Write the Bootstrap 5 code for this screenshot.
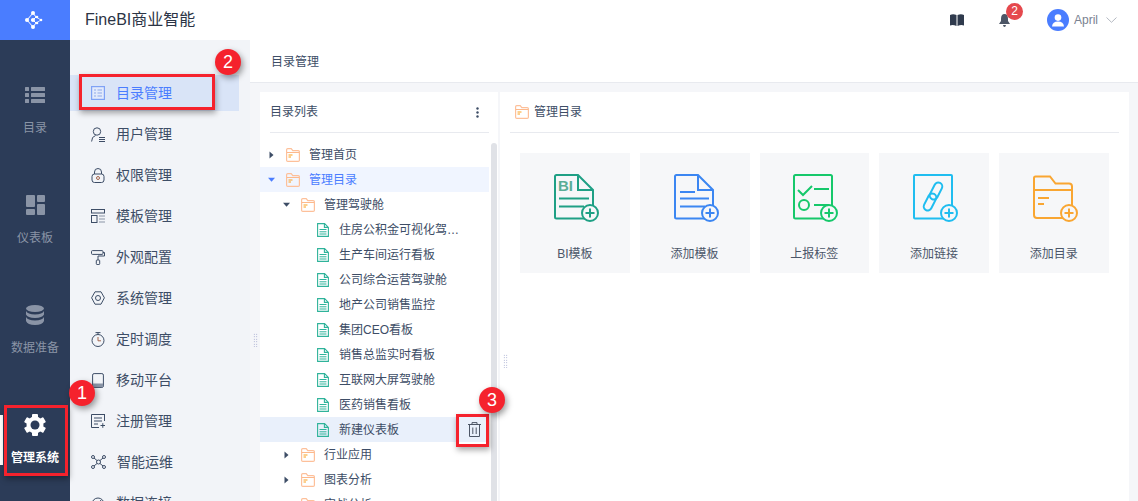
<!doctype html>
<html lang="zh">
<head>
<meta charset="utf-8">
<title>FineBI</title>
<link href="https://cdn.jsdelivr.net/npm/bootstrap@5.3.0/dist/css/bootstrap.min.css" rel="stylesheet">
<style>
html,body{height:501px;overflow:hidden}
body{font-family:"Liberation Sans","Noto Sans CJK SC",sans-serif;font-size:12px;color:#3d4d66;background:#f5f6f9;position:relative}
svg{display:block;flex:none}
.shell{height:501px;overflow:hidden}
.rail{width:70px;background:#2c3c58;flex:none}
.logo-box{height:40px;background:#4a7dff;flex:none}
.rail-item{height:110px;padding-top:44px;color:#8a94a6;gap:13px;flex:none}
.rail-ico{height:22px;display:flex;align-items:center;flex:none}
.rail-item.on{color:#fff;position:relative;font-weight:700}
.rail-item.on::before{content:"";position:absolute;left:0;top:45px;width:3px;height:50px;background:#fff}
.body-col{min-width:0;min-height:0}
.topbar{height:40px;background:#fff;padding-left:15px;flex:none}
.brand-name{font-size:16px;color:#2b3445}
.tool-zone{padding-right:21px}
.bell-wrap{position:relative;margin-left:35px;margin-right:37px}
.bell-badge{position:absolute;left:7px;top:-11px;width:17px;height:17px;border-radius:50%;background:#e5484d;color:#fff;font-size:12px;line-height:17px;text-align:center}
.avatar{width:22px;height:22px;border-radius:50%;background:#4a7dff}
.user-name{color:#7a8291;margin:0 8px 0 5px}
.lower{min-height:0;overflow:hidden}
.side-nav{width:180px;background:#f2f4f8;padding-top:35px;flex:none;overflow:hidden}
.nav-row{height:36px;margin:0 11px 5px 0;padding-left:21px;font-size:14px;gap:11px;color:#3d4d66;flex:none}
.nav-row.on{background:#d9e4f7;color:#4a7dff}
.main-col{min-width:0;min-height:0}
.crumbs{height:43px;background:#fff;border-bottom:1px solid #e8eaef;padding:2px 0 0 21px;flex:none}
.work{padding:9px 9px 0 10px;min-height:0;gap:2px;position:relative}
.list-pane{width:238px;background:#fff;flex:none;position:relative;overflow:hidden}
.pane-head{height:41px;margin:0 9px 0 10px;border-bottom:1px solid #e8eaef;flex:none}
.dots{margin-right:10px}
.tree-body{padding-top:9px;width:229px;flex:none}
.tree-row{height:25px;color:#3d4d66;flex:none}
.tree-row.sel{background:#f0f5ff;color:#4a7dff}
.tree-row.cur{background:#e9f0fb}
.lv1{padding-left:8px}.lv2{padding-left:23px}.lv3{padding-left:57px}
.tw{width:7px;margin-right:11px}
.lbl{margin-left:9px;white-space:nowrap}
.lv3 .lbl{margin-left:10px}
.bar-thumb{position:absolute;left:231px;top:51px;bottom:0;width:6px;border-radius:3px 3px 0 0;background:#e0e2e7}
.bin{position:absolute;left:208px;top:330px}
.right-pane{background:#fff;padding:0 10px;min-width:0}
.pane-title{height:41px;border-bottom:1px solid #e8eaef;padding-left:5px;gap:5px}
.tiles{padding:20px 0 0 10px;gap:10px}
.tile{width:109.75px;height:120px;background:#f6f7f9;padding-top:20px;gap:22px;color:#4b5668;flex:none}
.tile svg{margin-left:2px}
.grip{position:absolute;width:5px;height:14px;background-image:radial-gradient(#8f97c4 .7px,transparent .8px);background-size:2.5px 2.5px}
.note-ring{position:absolute;width:26px;height:26px;border-radius:50%;background:#f5222d;color:#fff;font-size:18px;line-height:26px;text-align:center;box-shadow:2px 3px 6px rgba(0,0,0,.4)}
.note-box{position:absolute;border:3px solid #f5222d;box-shadow:1px 3px 6px rgba(0,0,0,.35)}
</style>
</head>
<body>
<svg width="0" height="0" class="position-absolute">
<defs>
<symbol id="fld" viewBox="0 0 14 14"><path d="M.6 1.800q0-1.200 1.200-1.200h3.400l1.600 2h5.400q1.200 0 1.200 1.200v8.400q0 1.200-1.200 1.200H1.800q-1.200 0-1.200-1.200z" fill="none" stroke="#fdc09a" stroke-width="1.200"/><path d="M1 4.500h12" stroke="#fdb98c" stroke-width="1"/><path d="M2.500 7h4M2.500 9h2.500" stroke="#f9a01e" stroke-width="1"/></symbol>
<symbol id="doc" viewBox="0 0 12 14"><path d="M.6.600h7l3.800 3.800v9H.6zM7.400.800v3.600h3.800" fill="none" stroke="#2fb39a" stroke-width="1.100"/><path d="M2.500 6.500h7M2.500 8.800h7M2.500 11h7" stroke="#2fb39a" stroke-width="1"/></symbol>
<symbol id="arrR" viewBox="0 0 7 8"><path d="M1.500 0.500l4 3.500-4 3.500z" fill="#3d4d66"/></symbol>
<symbol id="arrD" viewBox="0 0 8 7"><path d="M0 1.500h8L4 6z" fill="currentColor"/></symbol>
</defs>
</svg>

<div class="d-flex shell">
  <aside class="rail d-flex flex-column">
    <div class="logo-box d-flex align-items-center justify-content-center">
      <svg width="20" height="20" viewBox="0 0 20 20"><g fill="none" stroke="#fff" stroke-width="1"><path d="M8 3L2 10l6 7M8 3l3 4-3 3 3 3-3 4M8 10l-2 0"/><path d="M11 7l5 3-5 3" opacity=".75"/></g><g fill="#fff"><circle cx="8" cy="3" r="2"/><circle cx="2" cy="10" r="2"/><circle cx="8" cy="17" r="2"/><circle cx="8" cy="10" r="2"/><circle cx="12" cy="7" r="1.300"/><circle cx="12" cy="13" r="1.300"/><circle cx="16" cy="10" r="1.300"/></g></svg>
    </div>
    <div class="rail-item d-flex flex-column align-items-center">
      <div class="rail-ico"><svg width="20" height="16" viewBox="0 0 20 16" fill="#8a94a6"><rect width="4" height="4" rx=".5"/><rect x="6" width="14" height="4" rx=".5"/><rect y="6" width="4" height="4" rx=".5"/><rect x="6" y="6" width="14" height="4" rx=".5"/><rect y="12" width="4" height="4" rx=".5"/><rect x="6" y="12" width="14" height="4" rx=".5"/></svg></div>
      <span>目录</span>
    </div>
    <div class="rail-item d-flex flex-column align-items-center">
      <div class="rail-ico"><svg width="19" height="20" viewBox="0 0 19 20" fill="#8a94a6"><rect width="9" height="12" rx="1"/><rect x="11" width="8" height="7" rx="1"/><rect y="14" width="9" height="6" rx="1"/><rect x="11" y="9" width="8" height="11" rx="1"/></svg></div>
      <span>仪表板</span>
    </div>
    <div class="rail-item d-flex flex-column align-items-center">
      <div class="rail-ico"><svg width="18" height="20" viewBox="0 0 18 20" fill="#8a94a6"><ellipse cx="9" cy="3.500" rx="9" ry="3.500"/><path d="M0 6c1 2.300 4 3.500 9 3.500S17 8.300 18 6v3.500c-1 2.300-4 3.500-9 3.500S1 11.800 0 9.500z"/><path d="M0 12c1 2.300 4 3.500 9 3.500s8-1.200 9-3.500v4c-1 2.500-4 4-9 4s-8-1.500-9-4z"/></svg></div>
      <span>数据准备</span>
    </div>
    <div class="rail-item on d-flex flex-column align-items-center">
      <div class="rail-ico"><svg width="22" height="22" viewBox="0 0 22 22"><g fill="#fff"><rect x="8" y="0" width="6" height="22" rx="1"/><rect x="8" y="0" width="6" height="22" rx="1" transform="rotate(60 11 11)"/><rect x="8" y="0" width="6" height="22" rx="1" transform="rotate(120 11 11)"/><circle cx="11" cy="11" r="8.500"/></g><circle cx="11" cy="11" r="4.500" fill="#2c3c58"/></svg></div>
      <span>管理系统</span>
    </div>
  </aside>

  <div class="body-col flex-grow-1 d-flex flex-column">
    <header class="topbar d-flex align-items-center justify-content-between">
      <span class="brand-name">FineBI商业智能</span>
      <div class="tool-zone d-flex align-items-center">
        <svg width="14" height="12" viewBox="0 0 14 12"><path d="M0 1q3-1.500 6.500 0V12Q3 10.500 0 11.500z" fill="#2f3a4d"/><path d="M14 1q-3-1.500-6.500 0V12q3.500-1.500 6.500-.5z" fill="#2f3a4d"/></svg>
        <div class="bell-wrap">
          <svg width="11" height="13" viewBox="0 0 11 13"><path d="M5.500 0q3.500 0 3.500 5v2l2 3H0l2-3V5q0-5 3.500-5zM4 11h3q-.3 2-1.500 2T4 11z" fill="#4d5666"/></svg>
          <span class="bell-badge">2</span>
        </div>
        <span class="avatar d-flex align-items-center justify-content-center">
          <svg width="12" height="13" viewBox="0 0 12 13" fill="#fff"><circle cx="6" cy="3.600" r="3.300"/><path d="M0 12.500q.5-5 6-5t6 5z"/></svg>
        </span>
        <span class="user-name">April</span>
        <svg width="11" height="6" viewBox="0 0 11 6"><path d="M.5.500l5 4.800 5-4.800" fill="none" stroke="#b4b9c2"/></svg>
      </div>
    </header>

    <div class="lower d-flex flex-grow-1">
      <nav class="side-nav d-flex flex-column">
        <div class="nav-row on d-flex align-items-center">
          <svg width="14" height="14" viewBox="0 0 14 14"><rect x=".6" y=".6" width="12.800" height="12.800" fill="#e2eafc" stroke="#7fa2f5" stroke-width="1.200"/><path d="M3 4h2M6.500 4H11M3 7h2M6.500 7H11M3 10h2M6.500 10H11" stroke="#8fa9e8"/></svg>
          <span>目录管理</span>
        </div>
        <div class="nav-row d-flex align-items-center">
          <svg width="14" height="15" viewBox="0 0 14 15" fill="none" stroke="#3d4d66"><circle cx="6" cy="4.500" r="3.700"/><path d="M.6 14.500q0-5 4-6"/><path d="M8 10.500h6M8 12.500h6M8 14.500h6"/></svg>
          <span>用户管理</span>
        </div>
        <div class="nav-row d-flex align-items-center">
          <svg width="14" height="15" viewBox="0 0 14 15" fill="none" stroke="#3d4d66"><path d="M3.500 6V4a3.500 3.500 0 0 1 7 0v2"/><rect x="1" y="6" width="12" height="8.500" rx="2.500"/><circle cx="7" cy="10" r="1.500" stroke="#a4664e"/></svg>
          <span>权限管理</span>
        </div>
        <div class="nav-row d-flex align-items-center">
          <svg width="14" height="14" viewBox="0 0 14 14" fill="none" stroke="#3d4d66"><rect x=".5" y=".5" width="13" height="3.500"/><rect x=".5" y="6.500" width="5.500" height="7"/><path d="M8 7h6M8 10h6M8 13h6" stroke="#8a94a6"/></svg>
          <span>模板管理</span>
        </div>
        <div class="nav-row d-flex align-items-center">
          <svg width="14" height="15" viewBox="0 0 14 15" fill="none" stroke="#3d4d66"><rect x=".5" y=".6" width="11.500" height="3.800" rx="1"/><path d="M12 2.500h1.500v3.500H7V10"/><rect x="5.300" y="10" width="3.400" height="4.500" rx=".8"/></svg>
          <span>外观配置</span>
        </div>
        <div class="nav-row d-flex align-items-center">
          <svg width="14" height="14" viewBox="0 0 14 14" fill="none" stroke="#3d4d66"><path d="M4 .8h6l3.400 6-3.400 6.400H4L.6 6.800z" stroke-linejoin="round"/><circle cx="7" cy="7" r="2.500"/></svg>
          <span>系统管理</span>
        </div>
        <div class="nav-row d-flex align-items-center">
          <svg width="14" height="15" viewBox="0 0 14 15" fill="none" stroke="#3d4d66"><path d="M4.500.6h5M7 .6v2"/><circle cx="7" cy="8.500" r="6"/><path d="M7 5v3.800h3" stroke="#a4664e"/></svg>
          <span>定时调度</span>
        </div>
        <div class="nav-row d-flex align-items-center">
          <svg width="14" height="15" viewBox="0 0 14 15"><rect x="1.600" y=".6" width="10.800" height="13.800" rx="1.500" fill="none" stroke="#3d4d66"/><rect x="2" y="10.500" width="10" height="3.500" fill="#8a94a6"/></svg>
          <span>移动平台</span>
        </div>
        <div class="nav-row d-flex align-items-center">
          <svg width="14" height="14" viewBox="0 0 14 14" fill="none" stroke="#3d4d66"><path d="M14 .5H.5v13H8M13.500 0v7"/><path d="M3 4h8M3 7h8M3 10h4M9.500 11.500h4.500M11.800 9.200v4.600"/></svg>
          <span>注册管理</span>
        </div>
        <div class="nav-row d-flex align-items-center">
          <svg width="15" height="14" viewBox="0 0 15 14" fill="none" stroke="#3d4d66"><circle cx="2" cy="2" r="1.500"/><circle cx="13" cy="2" r="1.500"/><circle cx="2" cy="12" r="1.500"/><circle cx="13" cy="12" r="1.500"/><circle cx="7.500" cy="7" r="2"/><path d="M3 3l3 2.500M12 3L9 5.500M3 11l3-2.500M12 11L9 8.500"/></svg>
          <span>智能运维</span>
        </div>
        <div class="nav-row d-flex align-items-center">
          <svg width="14" height="14" viewBox="0 0 14 14" fill="none" stroke="#3d4d66"><path d="M1 8a6 6 0 0 1 12 0"/><path d="M7 8l3-4"/></svg>
          <span>数据连接</span>
        </div>
      </nav>

      <main class="main-col flex-grow-1 d-flex flex-column">
        <div class="crumbs d-flex align-items-center">目录管理</div>
        <div class="work d-flex flex-grow-1">
          <section class="list-pane d-flex flex-column">
            <div class="pane-head d-flex align-items-center justify-content-between">
              <span>目录列表</span>
              <svg class="dots" width="3" height="11" viewBox="0 0 3 11" fill="#3d4d66"><circle cx="1.500" cy="1.500" r="1.200"/><circle cx="1.500" cy="5.500" r="1.200"/><circle cx="1.500" cy="9.500" r="1.200"/></svg>
            </div>
            <div class="tree-body d-flex flex-column">
              <div class="tree-row lv1 d-flex align-items-center"><svg class="tw" width="7" height="8"><use href="#arrR"/></svg><svg width="14" height="14"><use href="#fld"/></svg><span class="lbl">管理首页</span></div>
              <div class="tree-row sel lv1 d-flex align-items-center"><svg class="tw" width="8" height="7"><use href="#arrD"/></svg><svg width="14" height="14"><use href="#fld"/></svg><span class="lbl">管理目录</span></div>
              <div class="tree-row lv2 d-flex align-items-center"><svg class="tw" width="8" height="7"><use href="#arrD"/></svg><svg width="14" height="14"><use href="#fld"/></svg><span class="lbl">管理驾驶舱</span></div>
              <div class="tree-row lv3 d-flex align-items-center"><svg width="12" height="14"><use href="#doc"/></svg><span class="lbl">住房公积金可视化驾…</span></div>
              <div class="tree-row lv3 d-flex align-items-center"><svg width="12" height="14"><use href="#doc"/></svg><span class="lbl">生产车间运行看板</span></div>
              <div class="tree-row lv3 d-flex align-items-center"><svg width="12" height="14"><use href="#doc"/></svg><span class="lbl">公司综合运营驾驶舱</span></div>
              <div class="tree-row lv3 d-flex align-items-center"><svg width="12" height="14"><use href="#doc"/></svg><span class="lbl">地产公司销售监控</span></div>
              <div class="tree-row lv3 d-flex align-items-center"><svg width="12" height="14"><use href="#doc"/></svg><span class="lbl">集团CEO看板</span></div>
              <div class="tree-row lv3 d-flex align-items-center"><svg width="12" height="14"><use href="#doc"/></svg><span class="lbl">销售总监实时看板</span></div>
              <div class="tree-row lv3 d-flex align-items-center"><svg width="12" height="14"><use href="#doc"/></svg><span class="lbl">互联网大屏驾驶舱</span></div>
              <div class="tree-row lv3 d-flex align-items-center"><svg width="12" height="14"><use href="#doc"/></svg><span class="lbl">医药销售看板</span></div>
              <div class="tree-row cur lv3 d-flex align-items-center"><svg width="12" height="14"><use href="#doc"/></svg><span class="lbl">新建仪表板</span></div>
              <div class="tree-row lv2 d-flex align-items-center"><svg class="tw" width="7" height="8"><use href="#arrR"/></svg><svg width="14" height="14"><use href="#fld"/></svg><span class="lbl">行业应用</span></div>
              <div class="tree-row lv2 d-flex align-items-center"><svg class="tw" width="7" height="8"><use href="#arrR"/></svg><svg width="14" height="14"><use href="#fld"/></svg><span class="lbl">图表分析</span></div>
              <div class="tree-row lv2 d-flex align-items-center"><svg class="tw" width="7" height="8"><use href="#arrR"/></svg><svg width="14" height="14"><use href="#fld"/></svg><span class="lbl">实战分析</span></div>
            </div>
            <div class="bar-thumb"></div>
            <svg class="bin" width="13" height="15" viewBox="0 0 13 15" fill="none" stroke="#4d5666"><path d="M0 2.500h13M4 2.500V.6h5v1.900M1.500 2.500v12h10v-12M4.800 5.500v6.500M8.200 5.500v6.500"/></svg>
          </section>
          <section class="right-pane flex-grow-1">
            <div class="pane-title d-flex align-items-center">
              <svg width="14" height="14"><use href="#fld"/></svg><span>管理目录</span>
            </div>
            <div class="tiles d-flex">
              <div class="tile d-flex flex-column align-items-center">
                <svg width="46" height="50" viewBox="0 0 46 50"><path d="M25 2H3.500Q2 2 2 3.500V44q0 1.500 1.500 1.500H40V17zM25 2v15h15" fill="none" stroke="#1fa085" stroke-width="2"/><text x="5" y="17.500" font-family="Liberation Sans" font-size="15" font-weight="700" fill="#5aad96">BI</text><path d="M6 25.500h30M6 33.500h25" stroke="#1fa085" stroke-width="2"/><circle cx="37" cy="40" r="8" fill="#f6f7f9" stroke="#1fa085" stroke-width="2"/><path d="M37 35.500v9M32.500 40h9" stroke="#1fa085" stroke-width="2"/></svg>
                <span>BI模板</span>
              </div>
              <div class="tile d-flex flex-column align-items-center">
                <svg width="46" height="50" viewBox="0 0 46 50"><path d="M25 2H3.500Q2 2 2 3.500V44q0 1.500 1.500 1.500H40V17zM25 2v15h15" fill="none" stroke="#3b86f2" stroke-width="2"/><path d="M7 19h15M7 25.500h29M7 33.500h25" stroke="#3b86f2" stroke-width="2"/><circle cx="37" cy="40" r="8" fill="#f6f7f9" stroke="#3b86f2" stroke-width="2"/><path d="M37 35.500v9M32.500 40h9" stroke="#3b86f2" stroke-width="2"/></svg>
                <span>添加模板</span>
              </div>
              <div class="tile d-flex flex-column align-items-center">
                <svg width="46" height="50" viewBox="0 0 46 50"><rect x="2" y="2" width="38" height="43.500" rx="1.500" fill="none" stroke="#16c86b" stroke-width="2"/><path d="M6 17l5 5 9-9M22 16h15M22 32h15" fill="none" stroke="#16c86b" stroke-width="2"/><circle cx="12" cy="32" r="5" fill="none" stroke="#16c86b" stroke-width="2"/><circle cx="37" cy="40" r="8" fill="#f6f7f9" stroke="#16c86b" stroke-width="2"/><path d="M37 35.500v9M32.500 40h9" stroke="#16c86b" stroke-width="2"/></svg>
                <span>上报标签</span>
              </div>
              <div class="tile d-flex flex-column align-items-center">
                <svg width="46" height="50" viewBox="0 0 46 50"><rect x="2" y="2" width="38" height="43.500" rx="1" fill="none" stroke="#1fbdf0" stroke-width="2"/><g fill="none" stroke="#1fbdf0" stroke-width="2"><rect x="20" y="9" width="8" height="18" rx="4" transform="rotate(27 24 18)"/><rect x="14" y="20" width="8" height="18" rx="4" transform="rotate(27 18 29)"/></g><circle cx="37" cy="40" r="8" fill="#f6f7f9" stroke="#1fbdf0" stroke-width="2"/><path d="M37 35.500v9M32.500 40h9" stroke="#1fbdf0" stroke-width="2"/></svg>
                <span>添加链接</span>
              </div>
              <div class="tile d-flex flex-column align-items-center">
                <svg width="46" height="50" viewBox="0 0 46 50"><path d="M2 5q0-1.500 1.500-1.500H18l5.500 7H37q3 0 3 3V42q0 3-3 3H5q-3 0-3-3z" fill="none" stroke="#f9a632" stroke-width="2"/><path d="M2 17h38M6 25h11M6 31h6" stroke="#f9a632" stroke-width="2"/><circle cx="37" cy="40" r="8" fill="#f6f7f9" stroke="#f9a632" stroke-width="2"/><path d="M37 35.500v9M32.500 40h9" stroke="#f9a632" stroke-width="2"/></svg>
                <span>添加目录</span>
              </div>
            </div>
          </section>
        </div>
      </main>
    </div>
  </div>
</div>

<i class="grip" style="left:253px;top:333px"></i>
<i class="grip" style="left:503px;top:354px"></i>
<div class="note-box" style="left:79px;top:74px;width:136px;height:36px"></div>
<div class="note-box" style="left:4px;top:405px;width:64px;height:71px"></div>
<div class="note-box" style="left:456px;top:414px;width:33px;height:33px"></div>
<div class="note-ring" style="left:215px;top:49px">2</div>
<div class="note-ring" style="left:69px;top:380px">1</div>
<div class="note-ring" style="left:479px;top:387px">3</div>
<script src="https://cdn.jsdelivr.net/npm/bootstrap@5.3.0/dist/js/bootstrap.bundle.min.js"></script>
</body>
</html>
